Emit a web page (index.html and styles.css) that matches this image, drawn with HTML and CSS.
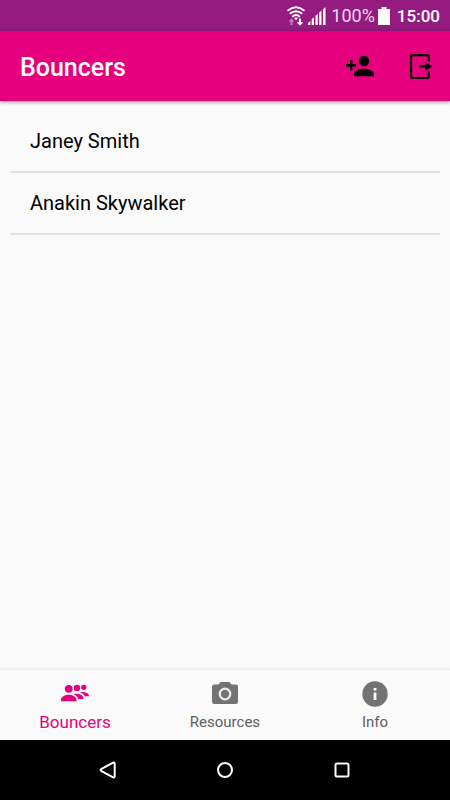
FILE: index.html
```html
<!DOCTYPE html>
<html lang="en">
<head>
<meta charset="utf-8">
<meta name="viewport" content="width=device-width, initial-scale=1">
<title>Bouncers</title>
<link rel="stylesheet" href="styles.css">
</head>
<body>
<div class="status-bar">
  <svg class="wifi" width="18" height="20" viewBox="0 0 18 20" aria-hidden="true">
    <g fill="none" stroke="#fff" stroke-width="1.900">
      <path d="M.5 4.800Q9-2.200 17.500 4.800"/>
      <path d="M2.800 7.800Q9 2.600 15.200 7.800"/>
      <path d="M5.200 10.700Q9 7.400 12.800 10.700"/>
    </g>
    <path fill="#fff" d="M7 12Q9 10.600 11 12L9 14.300z"/>
    <path fill="#c680be" d="M4.500 12.500L7.500 15.600H5.500V19h-2v-3.400h-2z"/>
    <path fill="#fff" d="M12 12.500h2v3.700h2.300L13 19.700l-3.300-3.500H12z"/>
  </svg>
  <svg class="signal" width="18" height="18" viewBox="0 0 18 18" aria-hidden="true">
    <path fill="#fff" d="M0 18v-2l2.400-2v4zM3.700 18v-5.700l2.300-2V18zM7.500 18V8.800l2.300-2V18zM11.200 18V5.400l2.300-2V18zM15 18V2.200L17.500 0v18z"/>
  </svg>
  <span class="charge">100%</span>
  <svg class="battery" width="12" height="18" viewBox="0 0 12 18" aria-hidden="true">
    <path fill="#fff" d="M3.500 0h5v2H12v16H0V2h3.500z"/>
  </svg>
  <time class="clock">15:00</time>
</div>

<header class="app-bar">
  <h1 class="title">Bouncers</h1>
  <button class="action" type="button" aria-label="Add bouncer">
    <svg width="30" height="30" viewBox="0 0 30 30" aria-hidden="true">
      <circle cx="19" cy="10" r="5.200"/>
      <path d="M9 25.200V23c0-3.500 6.500-5.300 10-5.300S29 19.500 29 23v2.200zM5 9h2.400v4H11v2.500H7.400v4H5v-4H1V13h4z"/>
    </svg>
  </button>
  <button class="action" type="button" aria-label="Log out">
    <svg width="30" height="30" viewBox="0 0 30 30" aria-hidden="true">
      <path fill="none" stroke="#000" stroke-width="2.200" d="M23.900 10.200V6.200q0-2-2-2H8q-2 0-2 2v18.800q0 2 2 2h13.900q2 0 2-2V20.500"/>
      <path d="M14 14.100h6v-3.600l7 4.900-7 4.900v-3.800h-6z"/>
    </svg>
  </button>
</header>

<main class="content">
  <ul class="people">
    <li class="person">Janey Smith</li>
    <li class="person">Anakin Skywalker</li>
  </ul>
</main>

<nav class="tabs" aria-label="Main">
  <a class="tab active" href="#bouncers" aria-current="page">
    <svg width="30" height="28" viewBox="0 0 30 28" fill="currentColor" aria-hidden="true">
      <circle cx="8.700" cy="8.800" r="3.900"/>
      <circle cx="17" cy="7.900" r="3.200"/>
      <circle cx="23.800" cy="7.300" r="2.600"/>
      <path d="M1 21.200V20c0-3.400 4.300-5.300 7.700-5.300s7.800 1.900 7.800 5.300v1.200zM13.500 14.200c4-1.200 10.200.8 10.200 4.700h-5.500c-.7-2.200-2.400-3.800-4.700-4.700zM20 12.300c4-.8 9 .5 9 3.900h-4.200c-.8-1.900-2.500-3.200-4.800-3.900z"/>
    </svg>
    <span>Bouncers</span>
  </a>
  <a class="tab" href="#resources">
    <svg width="30" height="28" viewBox="0 0 30 28" aria-hidden="true">
      <path fill="#737373" d="M10.500 2h9l2 2.500H26q2 0 2 2V22q0 2-2 2H4q-2 0-2-2V6.500q0-2 2-2h4.500z"/>
      <circle cx="15" cy="14" r="5.300" fill="none" stroke="#eee" stroke-width="2.200"/>
    </svg>
    <span>Resources</span>
  </a>
  <a class="tab" href="#info">
    <svg width="30" height="28" viewBox="0 0 30 28" aria-hidden="true">
      <circle cx="15" cy="14" r="12.700" fill="#737373"/>
      <path fill="#fafafa" d="M13.600 8h2.800v2.500h-2.800zM13.600 12.500h2.800V20h-2.800z"/>
    </svg>
    <span>Info</span>
  </a>
</nav>

<div class="system-bar">
  <button class="key" type="button" aria-label="Back">
    <svg width="18" height="18" viewBox="0 0 18 18" aria-hidden="true">
      <path d="M2.500 7.900L13.700 1.900q2-.9 2 1v12.200q0 1.900-2 1L2.500 10.100q-2-1.100 0-2.200z"/>
    </svg>
  </button>
  <button class="key" type="button" aria-label="Home">
    <svg width="18" height="18" viewBox="0 0 18 18" aria-hidden="true"><circle cx="9" cy="9" r="7"/></svg>
  </button>
  <button class="key" type="button" aria-label="Recent apps">
    <svg width="18" height="18" viewBox="0 0 18 18" aria-hidden="true"><rect x="2.500" y="2.500" width="13" height="13" rx="1.500"/></svg>
  </button>
</div>
</body>
</html>
```

FILE: styles.css
```css
* {
  box-sizing: border-box;
}

body {
  display: flex;
  flex-direction: column;
  min-height: 100vh;
  margin: 0;
  background: #fafafa;
  color: #000;
  font-family: Roboto, "Liberation Sans", sans-serif;
}

button {
  display: flex;
  padding: 0;
  border: 0;
  background: none;
  cursor: pointer;
}

svg {
  display: block;
  flex: none;
}

.status-bar {
  display: flex;
  align-items: center;
  justify-content: flex-end;
  height: 31px;
  padding: 0 10px;
  background: #951b81;
  color: #fff;
  font-size: 18px;
  line-height: 24px;
}

.signal {
  margin: 0 5px 0 3px;
}

.charge {
  color: #f0dced;
}

.battery {
  margin: 0 7px 0 3px;
}

.clock {
  font-size: 17px;
  font-weight: 500;
}

.app-bar {
  display: flex;
  align-items: center;
  gap: 30px;
  height: 70px;
  padding: 0 15px 0 20px;
  background: #e6007e;
  box-shadow: 0 1px 4px rgba(0, 0, 0, 0.45);
}

.title {
  flex: 1;
  margin: 0;
  padding-top: 4px;
  color: #fff;
  font-size: 25px;
  font-weight: 500;
  line-height: 32px;
}

.content {
  flex: 1;
  padding: 10px;
}

.people {
  margin: 0;
  padding: 0;
  list-style: none;
}

.person {
  padding: 16px 20px;
  border-bottom: 2px solid #e1e1e1;
  font-size: 20px;
  line-height: 28px;
}

.tabs {
  display: flex;
  height: 71px;
  border-top: 1px solid #ebebeb;
  box-shadow: 0 -1px 3px rgba(0, 0, 0, 0.05);
}

.tab {
  display: flex;
  flex: 1;
  flex-direction: column;
  align-items: center;
  gap: 3px;
  padding-top: 10px;
  color: #606060;
  font-size: 15px;
  line-height: 22px;
  text-decoration: none;
}

.active {
  color: #e6007e;
  font-size: 17px;
}

.system-bar {
  display: flex;
  align-items: center;
  justify-content: center;
  gap: 22%;
  height: 60px;
  background: #000;
}

.key svg {
  fill: none;
  stroke: #fff;
  stroke-width: 2;
  stroke-linejoin: round;
}
```
